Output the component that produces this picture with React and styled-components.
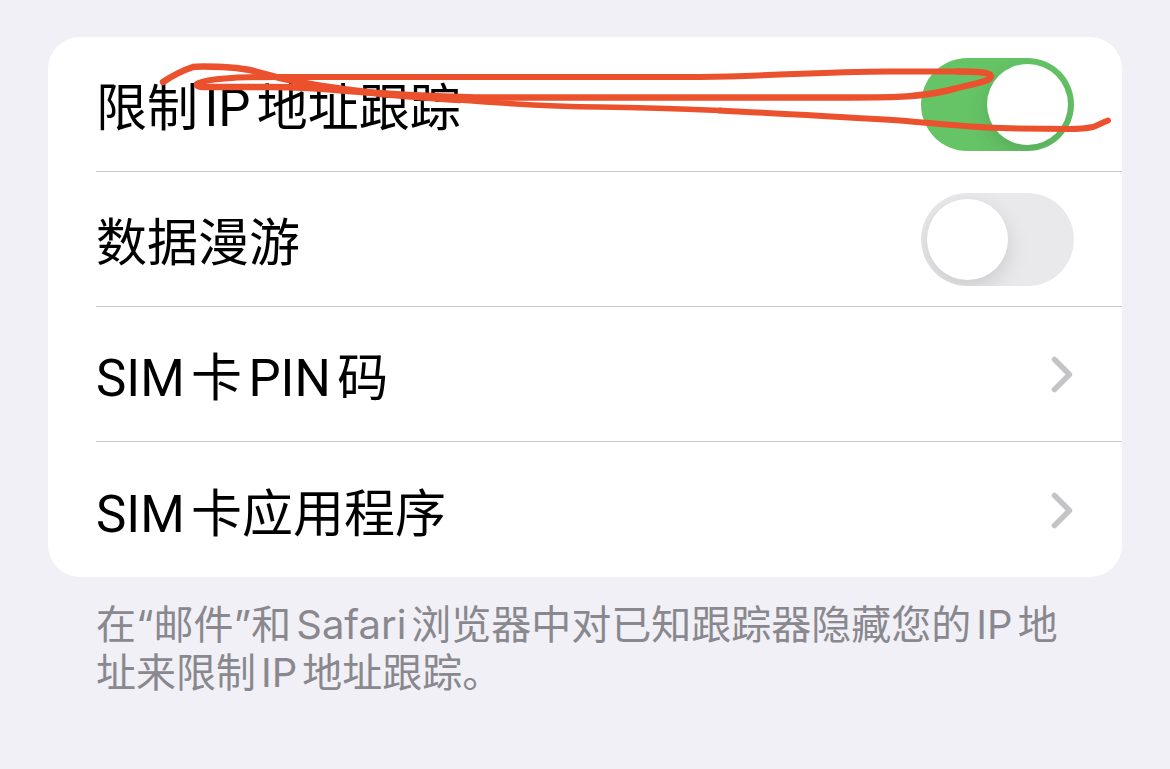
import styled, { createGlobalStyle } from 'styled-components';

function App() {
  return (
    <>
      <GlobalStyle />
      <Page>
        <SettingsCard>
          <SettingRow>
            <RowLabel htmlFor='limit-ip'>限制IP地址跟踪</RowLabel>
            <Switch type='checkbox' role='switch' id='limit-ip' defaultChecked />
            <Scribble />
          </SettingRow>
          <SettingRow>
            <RowLabel htmlFor='roaming'>数据漫游</RowLabel>
            <Switch type='checkbox' role='switch' id='roaming' />
          </SettingRow>
          <SettingRow>
            <RowLink href='#sim-pin'>
              <RowText>SIM卡PIN码</RowText>
              <Chevron />
            </RowLink>
          </SettingRow>
          <SettingRow>
            <RowLink href='#sim-apps'>
              <RowText>SIM卡应用程序</RowText>
              <Chevron />
            </RowLink>
          </SettingRow>
        </SettingsCard>
        <Footnote>
          在“邮件”和Safari浏览器中对已知跟踪器隐藏您的IP地址来限制IP地址跟踪。
        </Footnote>
      </Page>
    </>
  );
}

function Chevron() {
  return (
    <ChevronIcon viewBox='0 0 24 40' aria-hidden='true'>
      <path d='M4.5 5.5 L19.5 20.5 L4.5 35.5' />
    </ChevronIcon>
  );
}

// hand-drawn marker line over the first row
function Scribble() {
  return (
    <ScribbleLayer
      viewBox='0 0 1074 135'
      preserveAspectRatio='none'
      aria-hidden='true'
    >
      <path
        strokeWidth='6.5'
        d='M115 45 C124 39 136 33 145 30 C151 29 163 29.5 175 30 C203 31 215 37 232 41 C262 48 300 53 330 56.5 C360 60 385 61 412 63'
      />
      <path
        strokeWidth='5.5'
        d='M412 63 C450 66 500 69.5 552 70 C590 70.5 625 71.5 672 73.5'
      />
      <path
        strokeWidth='6'
        d='M672 73.5 C740 77 800 80 852 83.5 C895 87 930 91.5 970 91.5 L1022 92 C1032 92 1040 91 1045 90 C1050 88 1055 85.5 1060 83.5'
      />
      <path
        strokeWidth='6'
        d='M149 47 C153 44 167 42 184 41 C205 39.5 225 40 252 40 L652 40 C720 39 770 35 842 34.5 L910 34.5'
      />
      <path
        strokeWidth='6.5'
        d='M910 34.5 C928 34.5 943 35 943 39 C943 45 925 46.5 902 53 C872 60 850 60.5 802 60.5 L442 60.5 C390 60.5 340 57 300 54 C270 51 245 50 222 50 L155 50 C149 50 148 48 150 47'
      />
    </ScribbleLayer>
  );
}

export const GlobalStyle = createGlobalStyle`
  * {
    box-sizing: border-box;
  }
  body {
    margin: 0;
    background-color: #f1f0f6;
    font-family: Roboto, 'Noto Sans CJK SC', sans-serif;
    text-autospace: normal;
  }
`;
export const Page = styled.main`
  padding: 37px 48px;
`;
export const SettingsCard = styled.section`
  padding-left: 48px;
  background-color: white;
  border-radius: 32px;
`;
export const SettingRow = styled.div`
  position: relative;
  display: flex;
  align-items: center;
  justify-content: space-between;
  height: 135px;
  padding-right: 48px;
  border-bottom: 1px solid #c9c9cc;
  &:last-child {
    border-bottom: none;
  }
`;
export const RowLabel = styled.label`
  padding-top: 10px;
  font-size: 51px;
  line-height: 64px;
  color: black;
`;
export const RowText = styled.span`
  padding-top: 10px;
  font-size: 51px;
  line-height: 64px;
  color: black;
`;
export const RowLink = styled.a`
  flex: 1;
  display: flex;
  align-items: center;
  justify-content: space-between;
  text-decoration: none;
`;
export const Switch = styled.input`
  appearance: none;
  flex-shrink: 0;
  display: flex;
  width: 153px;
  height: 93px;
  margin: 0;
  padding: 6px;
  border-radius: 47px;
  background-color: #e9e9eb;
  overflow: hidden;
  cursor: pointer;
  &::before {
    content: '';
    width: 81px;
    height: 81px;
    border-radius: 50%;
    background-color: white;
    box-shadow: 0 8px 22px rgba(0, 0, 0, 0.13);
  }
  &:checked {
    justify-content: flex-end;
    background-color: #65c466;
  }
`;
export const ChevronIcon = styled.svg`
  width: 24px;
  height: 40px;
  fill: none;
  stroke: #c4c4c6;
  stroke-width: 5.5;
  stroke-linecap: round;
  stroke-linejoin: round;
`;
export const ScribbleLayer = styled.svg`
  position: absolute;
  top: 0;
  right: 0;
  left: -48px;
  width: calc(100% + 48px);
  height: 135px;
  pointer-events: none;
  fill: none;
  stroke: #eb512d;
  stroke-linecap: round;
  stroke-linejoin: round;
`;
export const Footnote = styled.p`
  margin: 0;
  padding: 24px 48px;
  font-family: Inter, 'Noto Sans CJK SC', sans-serif;
  font-size: 40px;
  line-height: 48px;
  color: #89888e;
`;
export default App;
